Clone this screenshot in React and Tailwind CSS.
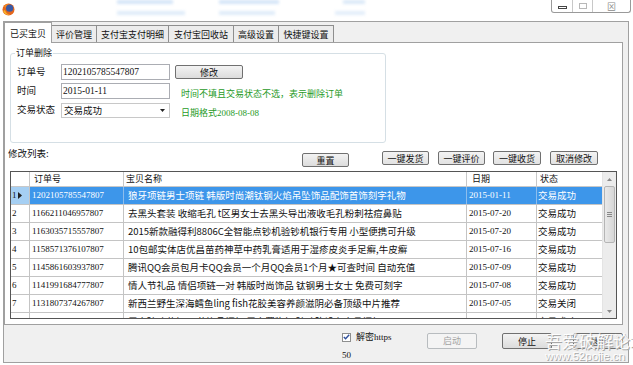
import React from "react";

const CJK = "font-['Noto_Sans_CJK_SC','Liberation_Sans',sans-serif]";
const NUM = "font-['Liberation_Serif','Noto_Sans_CJK_SC',serif]";

const TABS = [
  ["已买宝贝", "w-[48px]"],
  ["评价管理", "w-[45px]"],
  ["支付宝支付明细", "w-[72px]"],
  ["支付宝回收站", "w-[65px]"],
  ["高级设置", "w-[45px]"],
  ["快捷键设置", "w-[55px]"],
];

const ROWS = [
  ["1202105785547807", "狼牙项链男士项链 韩版时尚潮钛钢火焰吊坠饰品配饰首饰刻字礼物", "2015-01-11", "交易成功"],
  ["1166211046957807", "去黑头套装 收缩毛孔 t区男女士去黑头导出液收毛孔粉刺祛痘鼻贴", "2015-07-20", "交易成功"],
  ["1163035715557807", "2015新款融得利8806C全智能点钞机验钞机银行专用 小型便携可升级", "2015-07-20", "交易成功"],
  ["1158571376107807", "10包邮实体店优昌苗药神草中药乳膏适用于湿疹皮炎手足癣,牛皮癣", "2015-07-16", "交易成功"],
  ["1145861603937807", "腾讯QQ会员包月卡QQ会员一个月QQ会员1个月★可查时间 自动充值", "2015-07-09", "交易成功"],
  ["1141991684777807", "情人节礼品 情侣项链一对 韩版时尚饰品 钛钢男士女士 免费可刻字", "2015-07-08", "交易成功"],
  ["1131807374267807", "新西兰野生深海鳕鱼ling fish花胶美容养颜滋阴必备顶级中片推荐", "2015-07-05", "交易关闭"],
  ["1128883054587807", "居家玻璃花架 工艺饰品摆架 居家置物架 玻璃陈设台家具摆架", "2015-07-04", "交易成功"],
];

function Firefox() {
  return (
    <svg width="13" height="13" viewBox="0 0 13 13" className="ml-[2px] mt-[3px] shrink-0">
      <circle cx="6.5" cy="6.5" r="6" fill="#e4661c" />
      <circle cx="7.6" cy="5.2" r="3.6" fill="#3a5aa6" />
      <path d="M1 8 Q3 12.5 8 12 Q4 11 3 7 Z" fill="#f7b22a" />
      <path d="M2 3 Q4 0.5 7 1 Q4 2 3.5 5 Z" fill="#f08a24" />
    </svg>
  );
}

function Btn({ children, className = "" }) {
  return (
    <div
      className={`flex items-center justify-center rounded-[2px] border border-[#707070] bg-gradient-to-b from-[#f3f3f3] to-[#dcdcdc] text-[9px] leading-none text-[#111] ${className}`}
    >
      {children}
    </div>
  );
}

function Arrow({ up }) {
  return (
    <svg width="5" height="3" viewBox="0 0 5 3">
      <path d={up ? "M0 3 L2.5 0 L5 3 Z" : "M0 0 L5 0 L2.5 3 Z"} fill="#8a8a8a" />
    </svg>
  );
}

function Table() {
  return (
    <div className="ml-[5px] mt-[3px] flex h-[148px] w-[607px] border border-[#555]">
      <div className="flex w-[591px] flex-col overflow-hidden">
        {/* header */}
        <div className="flex h-[15px] shrink-0 border-b border-[#c8c8c8] bg-white text-[9px] leading-[14px]">
          <div className="w-[19px] border-r border-[#c8c8c8]" />
          <div className="w-[94px] border-r border-[#c8c8c8] pl-[4px]">订单号</div>
          <div className="w-[343px] border-r border-[#c8c8c8] pl-[2px]">宝贝名称</div>
          <div className="w-[70px] border-r border-[#c8c8c8] pl-[5px]">日期</div>
          <div className="w-[65px] pl-[3px]">状态</div>
        </div>
        {ROWS.map((r, i) => {
          const sel = i === 0;
          const cell = sel
            ? "border-r border-[#8dbdec] bg-[#3d96ea] text-white"
            : "border-r border-[#c4c4c4] text-[#111]";
          return (
            <div key={r[0]} className="flex h-[18px] shrink-0 items-center border-b border-[#c4c4c4]">
              <div
                className={`flex h-full w-[19px] items-center border-r border-[#c4c4c4] pl-[1px] ${NUM} text-[9px] ${
                  sel ? "bg-[#a5cff3]" : "bg-white"
                }`}
              >
                {i + 1}
                {sel && (
                  <svg width="4" height="7" viewBox="0 0 4 7" className="ml-[1px]">
                    <path d="M0 0 L4 3.5 L0 7 Z" fill="#222" />
                  </svg>
                )}
              </div>
              <div className={`flex h-full w-[94px] items-center pl-[2px] ${NUM} text-[9px] ${cell}`}>{r[0]}</div>
              <div className={`flex h-full w-[343px] items-center overflow-hidden whitespace-nowrap pl-[4px] text-[9.5px] ${cell}`}>
                {r[1]}
              </div>
              <div className={`flex h-full w-[70px] items-center pl-[2px] ${NUM} text-[9px] ${cell}`}>{r[2]}</div>
              <div
                className={`flex h-full w-[65px] items-center pl-[1px] text-[9.5px] ${
                  sel ? "bg-[#3d96ea] text-white" : "text-[#111]"
                }`}
              >
                {r[3]}
              </div>
            </div>
          );
        })}
      </div>
      {/* scrollbar */}
      <div className="flex w-[14px] flex-col border-l border-[#e4e4e4] bg-[#ececec]">
        <div className="flex h-[14px] items-center justify-center">
          <Arrow up />
        </div>
        <div className="mx-[1px] flex h-[57px] items-center justify-center rounded-[2px] border border-[#b5b5b5] bg-gradient-to-r from-[#e9e9e9] to-[#d7d7d7]">
          <div className="flex flex-col gap-[1px]">
            <div className="h-px w-[5px] bg-[#888]" />
            <div className="h-px w-[5px] bg-[#888]" />
            <div className="h-px w-[5px] bg-[#888]" />
          </div>
        </div>
        <div className="flex-1" />
        <div className="flex h-[14px] items-center justify-center">
          <Arrow />
        </div>
      </div>
    </div>
  );
}

export default function App() {
  return (
    <div className={`relative h-[365px] w-[633px] overflow-hidden bg-white text-[#111] ${CJK}`}>
      {/* title bar */}
      <div className="flex h-[21px] items-start">
        <Firefox />
        <div className="ml-[102px] flex flex-col gap-[7px] blur-[1.5px]">
          <div className="h-[4px] w-[56px] bg-[#d4e5f8]" />
          <div className="h-[4px] w-[68px] bg-[#dfecf9]" />
        </div>
        <div className="ml-[34px] flex flex-col gap-[7px] blur-[1.5px]">
          <div className="h-[4px] w-[60px] bg-[#d4e5f8]" />
          <div className="h-[4px] w-[56px] bg-[#dfecf9]" />
        </div>
        <div className="ml-[56px] flex flex-col items-end gap-[7px] blur-[1.5px]">
          <div className="h-[4px] w-[22px] bg-[#dbe9f8]" />
          <div className="h-[4px] w-[30px] bg-[#e3eefa]" />
        </div>
        <div className="ml-auto mr-[2px] flex h-[13px] rounded-b-[3px] border border-t-0 border-[#9a9a9a] bg-white">
          <div className="flex w-[21px] items-end justify-center border-r border-[#c8c8c8] pb-[3px]">
            <div className="h-[3px] w-[9px] border border-[#444]" />
          </div>
          <div className="flex w-[20px] items-center justify-center border-r border-[#c8c8c8]">
            <div className="h-[6px] w-[8px] border border-[#b8b8b8]" />
          </div>
          <div className="flex w-[37px] items-center justify-center text-[9px] leading-none text-[#8a8a8a]">
            ⊠
          </div>
        </div>
      </div>

      {/* window */}
      <div className="ml-[3px] flex h-[342px] w-[626px] flex-col border border-[#a0a0a0] bg-[#f0f0f0]">
        {/* tabs */}
        <div className="flex h-[20px] items-end">
          {TABS.map(([t, w], i) =>
            i === 0 ? (
              <div
                key={t}
                className={`relative z-10 -mb-px flex h-[21px] ${w} items-start justify-center border border-b-0 border-[#a0a0a0] bg-white pt-[6px] text-[9px] leading-none`}
              >
                {t}
              </div>
            ) : (
              <div
                key={t}
                className={`flex h-[17px] ${w} items-center justify-center border-t border-r border-[#8e8e8e] bg-[#ececec] text-[9px] leading-none`}
              >
                {t}
              </div>
            )
          )}
        </div>

        {/* panel */}
        <div className="flex h-[283px] w-[619px] flex-col border border-[#a0a0a0] bg-white">
          {/* group box */}
          <div className="relative ml-[5px] mt-[10px] h-[90px] w-[376px] rounded-[3px] border border-[#d5dfe5]">
            <span className="absolute -top-[7px] left-[4px] bg-white px-[1px] text-[9px] leading-[12px]">订单删除</span>
            <div className="flex flex-col pl-[6px] pt-[10px]">
              <div className="flex h-[16px] items-center">
                <span className="w-[44px] text-[9.5px] leading-none">订单号</span>
                <div className={`flex h-[16px] w-[109px] items-center border border-[#abadb3] pl-[1px] ${NUM} text-[9.5px]`}>
                  1202105785547807
                </div>
                <Btn className="ml-[5px] h-[14px] w-[68px]">修改</Btn>
              </div>
              <div className="mt-[3px] flex h-[16px] items-center">
                <span className="w-[44px] text-[9.5px] leading-none">时间</span>
                <div className={`flex h-[16px] w-[109px] items-center border border-[#abadb3] pl-[1px] ${NUM} text-[9.5px]`}>
                  2015-01-11
                </div>
                <span className="ml-[11px] mt-[4px] text-[9px] leading-none text-[#1f9a1f]">
                  时间不填且交易状态不选，表示删除订单
                </span>
              </div>
              <div className="mt-[3px] flex h-[16px] items-center">
                <span className="w-[44px] text-[9.5px] leading-none">交易状态</span>
                <div className="flex h-[15px] w-[109px] items-center justify-between border border-[#c8c8c8] pl-[2px] pr-[4px] text-[9.5px]">
                  交易成功
                  <svg width="5" height="3" viewBox="0 0 5 3">
                    <path d="M0 0 L5 0 L2.5 3 Z" fill="#222" />
                  </svg>
                </div>
                <span className="ml-[11px] mt-[5px] text-[9px] leading-none text-[#1f9a1f]">
                  日期格式<span className={NUM}>2008-08-08</span>
                </span>
              </div>
            </div>
          </div>

          {/* list toolbar */}
          <div className="mt-[6px] flex h-[19px] items-start">
            <span className="ml-[3px] -mt-[2px] w-[294px] text-[9.5px] leading-[12px]">修改列表:</span>
            <Btn className="mt-[4px] h-[14px] w-[47px]">重置</Btn>
            <Btn className="ml-[33px] mt-[2px] h-[14px] w-[47px] border-[#5e5e5e] from-[#f0f0f0] to-[#e2e2e2]">一键发货</Btn>
            <Btn className="ml-[9px] mt-[2px] h-[14px] w-[47px] border-[#5e5e5e] from-[#f0f0f0] to-[#e2e2e2]">一键评价</Btn>
            <Btn className="ml-[8px] mt-[2px] h-[14px] w-[48px] border-[#5e5e5e] from-[#f0f0f0] to-[#e2e2e2]">一键收货</Btn>
            <Btn className="ml-[9px] mt-[2px] h-[14px] w-[48px] border-[#5e5e5e] from-[#f0f0f0] to-[#e2e2e2]">取消修改</Btn>
          </div>

          <Table />
        </div>

        {/* bottom bar */}
        <div className="flex flex-1 items-start">
          <div className="ml-[338px] mt-[7px] flex w-[85px] flex-col">
            <div className="flex items-center">
              <div className="flex h-[9px] w-[9px] items-center justify-center border border-[#8e8f8f] bg-white">
                <svg width="7" height="6" viewBox="0 0 7 6">
                  <path d="M0.8 3 L2.6 4.8 L6.2 0.8" stroke="#2f4f9c" strokeWidth="1.4" fill="none" />
                </svg>
              </div>
              <span className="ml-[5px] text-[9px] leading-none">
                解密<span className={NUM}>https</span>
              </span>
            </div>
            <span className={`mt-[9px] ${NUM} text-[9px] leading-none`}>50</span>
          </div>
          <div className="mt-[8px] flex h-[16px] w-[50px] items-center justify-center rounded-[2px] border border-[#b8bcbf] bg-[#f4f4f4] text-[9px] text-[#a3a3a3]">
            启动
          </div>
          <Btn className="ml-[25px] mt-[8px] h-[16px] w-[50px] border-[#3a3a3a]">停止</Btn>
          <Btn className="ml-[21px] mt-[8px] h-[16px] w-[50px]">退出</Btn>
        </div>
      </div>

      {/* watermark */}
      <div className="pointer-events-none absolute left-[545px] top-[331px] flex flex-col text-white/90 [text-shadow:1px_1px_0_#a8a8a8]">
        <span className="whitespace-nowrap text-[17px] leading-[19px]">吾爱破解论坛</span>
        <span className="whitespace-nowrap font-['Liberation_Sans',sans-serif] text-[11.5px] leading-[13px]">www.52pojie.cn</span>
      </div>
    </div>
  );
}
